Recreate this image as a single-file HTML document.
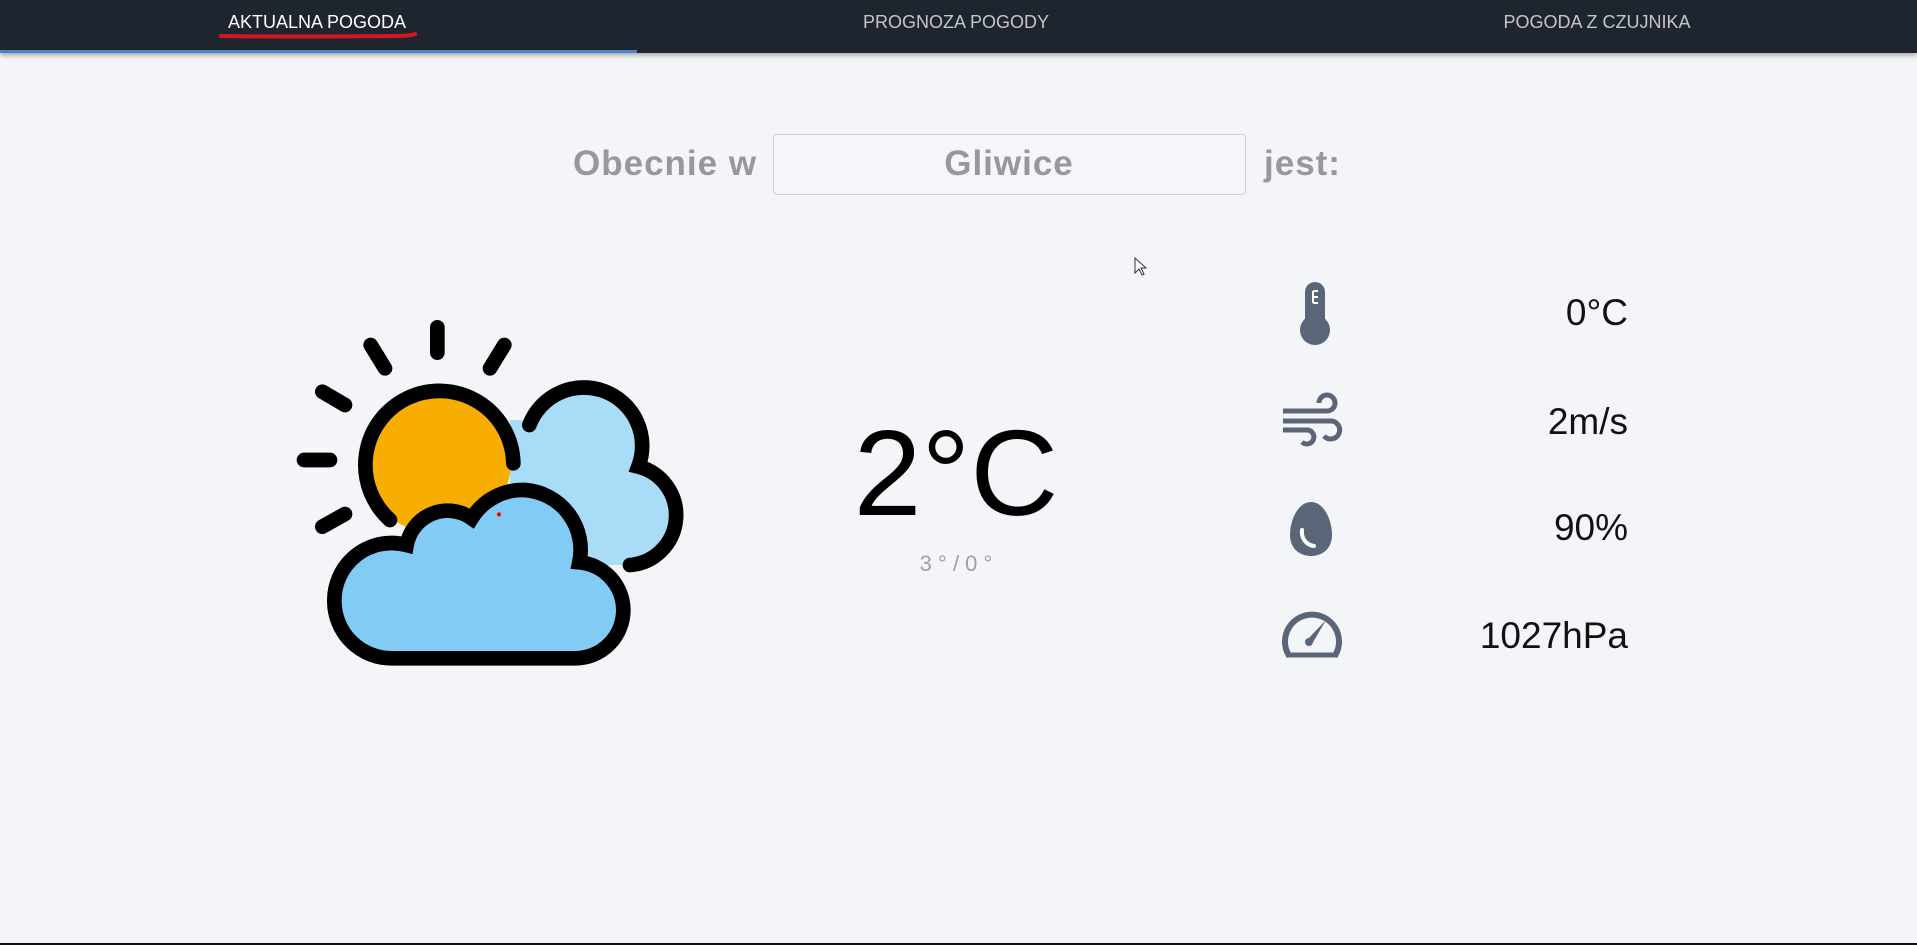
<!DOCTYPE html>
<html><head><meta charset="utf-8"><style>
html,body{margin:0;padding:0;width:1917px;height:945px;overflow:hidden;background:#f4f5f9;font-family:"Liberation Sans",sans-serif;}
.nav{position:absolute;left:0;top:0;width:1917px;height:53px;background:#1f252e;box-shadow:0 2px 5px rgba(0,0,0,.35);}
.tab{position:absolute;top:12px;font-size:18px;color:#c3c6cb;transform:translateX(-50%);white-space:nowrap;}
.ind{position:absolute;left:0;top:50px;width:637px;height:3px;background:#4a86c5;}
.t{position:absolute;white-space:nowrap;}
.lbl{font-weight:bold;font-size:35px;color:#97979c;letter-spacing:1px;}
.box{position:absolute;left:773px;top:134px;width:471px;height:59px;border:1px solid #cdd0d5;border-radius:4px;background:#f5f6f9;}
.val{position:absolute;right:289px;font-size:37px;color:#111;transform:translateY(-50%);}
.sep{position:absolute;left:1265px;width:365px;height:1px;background:#eef0f4;}
</style></head><body>
<div class="nav">
  <div class="tab" style="left:317px;color:#fff">AKTUALNA POGODA</div>
  <div class="tab" style="left:956px">PROGNOZA POGODY</div>
  <div class="tab" style="left:1597px">POGODA Z CZUJNIKA</div>
  <div class="ind"></div>
</div>
<svg style="position:absolute;left:0;top:0" width="500" height="60"><path d="M221 36 Q300 37 395 36 Q410 36 415 34" stroke="#d3161b" stroke-width="4" fill="none" stroke-linecap="round"/></svg>

<div class="t lbl" style="left:573px;top:144px">Obecnie w</div>
<div class="box"></div>
<div class="t lbl" style="left:1009px;top:144px;transform:translateX(-50%)">Gliwice</div>
<div class="t lbl" style="left:1264px;top:144px">jest:</div>

<svg style="position:absolute;left:290px;top:310px" width="400" height="370" viewBox="0 0 1200 1110">
 <g stroke="#000" stroke-width="44" stroke-linecap="round" fill="none">
  <path d="M700 330 A170 170 0 0 1 1045 470 A150 150 0 0 1 1020 765 L660 765 L660 330Z" fill="#a9dcf6" stroke="none"/>
  <circle cx="442" cy="450" r="222" fill="#f8ae00" stroke="none"/>
  <path d="M718 345 A170 170 0 0 1 1045 470 A150 150 0 0 1 1020 765"/>
  <path d="M300 630 A222 222 0 1 1 670 460"/>
  <path d="M442 52V128M242 105L285 175M643 105L600 175M97 245L165 285M42 450H120M97 650L165 612"/>
  <path d="M305 1045 L855 1045 A145 145 0 0 0 1000 900 A145 145 0 0 0 868 757 A180 180 0 0 0 705 540 A180 180 0 0 0 545 625 A125 125 0 0 0 350 705 A172 172 0 0 0 133 875 A172 172 0 0 0 305 1045Z" fill="#82cbf5"/>
 </g>
 <circle cx="627" cy="613" r="6" fill="#e00"/>
</svg>

<div class="t" style="left:956px;top:412px;transform:translateX(-50%);font-size:122px;color:#000;line-height:1">2°C</div>
<div class="t" style="left:956px;top:551px;transform:translateX(-50%);font-size:22px;color:#a0a0a4">3 ° / 0 °</div>

<div class="sep" style="top:380px"></div>
<div class="sep" style="top:490px"></div>
<div class="sep" style="top:582px"></div>

<svg style="position:absolute;left:1270px;top:270px" width="90" height="400" viewBox="1270 270 90 400" fill="#5a6677">
 <rect x="1305" y="282" width="20" height="48" rx="10"/>
 <circle cx="1315" cy="330" r="15"/>
 <path d="M1313 291h5M1313 297h5M1313 303h5M1313 291v12" stroke="#fff" stroke-width="2"/>
 <g stroke="#5a6677" stroke-width="5" fill="none" stroke-linecap="butt">
  <path d="M1283 411H1327A8 8 0 1 0 1319 403"/>
  <path d="M1283 421H1330A9 9 0 1 1 1324 436"/>
  <path d="M1283 430H1306A7 7 0 1 1 1302 442"/>
 </g>
 <path d="M1311 502C1298 502 1290 520 1290 535C1290 548 1299 556 1311 556C1323 556 1332 548 1332 535C1332 520 1324 502 1311 502Z"/>
 <path d="M1302 530C1301 538 1306 545 1314 546" stroke="#fff" stroke-width="4" fill="none" stroke-linecap="round"/>
 <path d="M1288 654A27 27 0 1 1 1336 654" stroke="#5a6677" stroke-width="6" fill="none"/>
 <path d="M1286 655H1338" stroke="#5a6677" stroke-width="5"/>
 <path d="M1307 640L1326 620L1312 644Z"/>
 <circle cx="1309" cy="642" r="4"/>
</svg>

<div class="val" style="top:313px">0°C</div>
<div class="val" style="top:422px">2m/s</div>
<div class="val" style="top:528px">90%</div>
<div class="val" style="top:636px">1027hPa</div>

<svg style="position:absolute;left:1134px;top:257px" width="14" height="20"><path d="M1 1V16L5 12L8 18L10 17L7 11H12Z" fill="#fff" stroke="#333" stroke-width="1"/></svg>
<div style="position:absolute;left:0;top:943px;width:1917px;height:2px;background:#111"></div>
</body></html>
